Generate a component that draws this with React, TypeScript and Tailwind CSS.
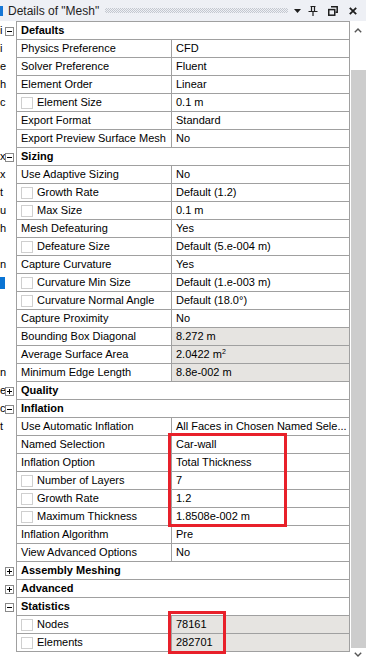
import React from "react";

type Row = {
  label: string;
  value?: React.ReactNode;
  head?: boolean;
  box?: "+" | "-";
  check?: boolean;
  gray?: boolean;
  g?: string;
  sel?: boolean;
};

const rows: Row[] = [
  { label: "Defaults", head: true, box: "-", g: "i" },
  { label: "Physics Preference", value: "CFD", g: "i" },
  { label: "Solver Preference", value: "Fluent", g: "e" },
  { label: "Element Order", value: "Linear", g: "h" },
  { label: "Element Size", value: "0.1 m", check: true, g: "c" },
  { label: "Export Format", value: "Standard" },
  { label: "Export Preview Surface Mesh", value: "No" },
  { label: "Sizing", head: true, box: "-", g: "x" },
  { label: "Use Adaptive Sizing", value: "No", g: "x" },
  { label: "Growth Rate", value: "Default (1.2)", check: true, g: "t" },
  { label: "Max Size", value: "0.1 m", check: true, g: "u" },
  { label: "Mesh Defeaturing", value: "Yes", g: "h" },
  { label: "Defeature Size", value: "Default (5.e-004 m)", check: true },
  { label: "Capture Curvature", value: "Yes", g: "n" },
  { label: "Curvature Min Size", value: "Default (1.e-003 m)", check: true, sel: true },
  { label: "Curvature Normal Angle", value: "Default (18.0°)", check: true },
  { label: "Capture Proximity", value: "No" },
  { label: "Bounding Box Diagonal", value: "8.272 m", gray: true },
  {
    label: "Average Surface Area",
    value: (
      <>
        2.0422 m<span className="text-[7px] align-[4px] leading-none">2</span>
      </>
    ),
    gray: true,
  },
  { label: "Minimum Edge Length", value: "8.8e-002 m", gray: true, g: "n" },
  { label: "Quality", head: true, box: "+", g: "e" },
  { label: "Inflation", head: true, box: "-", g: "c" },
  { label: "Use Automatic Inflation", value: "All Faces in Chosen Named Sele...", g: "t" },
  { label: "Named Selection", value: "Car-wall" },
  { label: "Inflation Option", value: "Total Thickness" },
  { label: "Number of Layers", value: "7", check: true },
  { label: "Growth Rate", value: "1.2", check: true },
  { label: "Maximum Thickness", value: "1.8508e-002 m", check: true },
  { label: "Inflation Algorithm", value: "Pre" },
  { label: "View Advanced Options", value: "No" },
  { label: "Assembly Meshing", head: true, box: "+" },
  { label: "Advanced", head: true, box: "+" },
  { label: "Statistics", head: true, box: "-" },
  { label: "Nodes", value: "78161", check: true, gray: true },
  { label: "Elements", value: "282701", check: true, gray: true },
];

function Box({ kind }: { kind: "+" | "-" }) {
  return (
    <div className="absolute left-[5px] top-[5px] w-[9px] h-[9px] border border-[#8a8a8a] bg-white flex items-center justify-center">
      <div className="relative w-[5px] h-[5px]">
        <div className="absolute left-0 top-[2px] w-[5px] h-[1px] bg-black" />
        {kind === "+" && <div className="absolute left-[2px] top-0 w-[1px] h-[5px] bg-black" />}
      </div>
    </div>
  );
}

function Check() {
  return <div className="w-[12px] h-[12px] border border-[#cfcfcf] bg-white shrink-0 mr-[4px]" />;
}

function PropRow({ r }: { r: Row }) {
  return (
    <div className="flex h-[18px]">
      <div className="relative w-[16px] shrink-0">
        {r.g && <div className="absolute left-0 top-0 leading-[17px]">{r.g}</div>}
        {r.sel && <div className="absolute left-0 top-[3px] w-[5px] h-[12px] bg-[#0a74d4]" />}
        {r.box && <Box kind={r.box} />}
      </div>
      <div className="flex flex-1 min-w-0 border-l border-r border-b border-[#a0a0a0] leading-[17px]">
        {r.head ? (
          <div className="pl-[4px] font-bold">{r.label}</div>
        ) : (
          <>
            <div className="w-[155px] shrink-0 border-r border-[#a0a0a0] flex items-center pl-[4px] whitespace-nowrap">
              {r.check && <Check />}
              {r.label}
            </div>
            <div className={`flex-1 min-w-0 pl-[4px] whitespace-nowrap overflow-hidden ${r.gray ? "bg-[#e6e4e1]" : "bg-white"}`}>
              {r.value}
            </div>
          </>
        )}
      </div>
    </div>
  );
}

export default function App() {
  return (
    <div className="w-[366px] h-[657px] bg-white relative overflow-hidden text-black font-['Liberation_Sans',Arial,sans-serif] text-[11px]">
      {/* title bar */}
      <div className="h-[21px] bg-[#eef0f5] flex items-center relative">
        <div className="absolute left-0 top-[6px] w-[3px] h-[10px] bg-[#1677d6]" />
        <div className="pl-[8px] text-[12px] text-[#1e1e1e] whitespace-nowrap">Details of "Mesh"</div>
        <div className="flex-1 mx-[6px] h-[5px] bg-[repeating-conic-gradient(#c3c7cf_0_25%,transparent_0_50%)] bg-[length:2px_2px]" />
        <div className="flex items-center gap-[7px] pr-[9px]">
          <svg width="7" height="4" viewBox="0 0 7 4">
            <path d="M0 0h7L3.5 4z" fill="#1e1e1e" />
          </svg>
          <svg width="10" height="10" viewBox="0 0 10 10">
            <path d="M2.5 0.5h5M3.5 0.5v5M6.5 0.5v5M0.5 5.5h9M5 6v4" stroke="#1e1e1e" strokeWidth="1.2" fill="none" />
          </svg>
          <svg width="10" height="10" viewBox="0 0 10 10" className="ml-[3px]">
            <path d="M3 0.8h6.2v5.4H7.5" stroke="#1e1e1e" strokeWidth="1.5" fill="none" />
            <rect x="0.75" y="3.6" width="6" height="5.6" stroke="#1e1e1e" strokeWidth="1.5" fill="none" />
          </svg>
          <svg width="8" height="8" viewBox="0 0 8 8" className="ml-[4px]">
            <path d="M0.8 0.8l6.4 6.4M7.2 0.8L0.8 7.2" stroke="#1e1e1e" strokeWidth="1.8" />
          </svg>
        </div>
      </div>

      <div className="flex">
        <div className="w-[350px] shrink-0">
          <div className="ml-[16px] border-t border-[#a0a0a0]" />
          {rows.map((r, i) => (
            <PropRow key={i} r={r} />
          ))}
        </div>
        {/* scrollbar */}
        <div className="w-[16px] h-[636px] flex flex-col items-center">
          <svg width="8" height="5" viewBox="0 0 8 5" className="mt-[7px]">
            <path d="M0.8 4.2L4 1l3.2 3.2" stroke="#555" strokeWidth="1.4" fill="none" />
          </svg>
          <div className="mt-[37px] w-[15px] ml-[1px] flex-1 bg-[#cdcdcd]" />
          <svg width="8" height="5" viewBox="0 0 8 5" className="mt-[4px]">
            <path d="M0.8 0.8L4 4l3.2-3.2" stroke="#555" strokeWidth="1.4" fill="none" />
          </svg>
        </div>
      </div>

      {/* red annotation boxes */}
      <div className="absolute left-[168px] top-[433px] w-[119px] h-[94px] border-[3px] border-[#e8202a]" />
      <div className="absolute left-[168px] top-[611px] w-[58px] h-[43px] border-[3px] border-[#e8202a]" />
    </div>
  );
}
